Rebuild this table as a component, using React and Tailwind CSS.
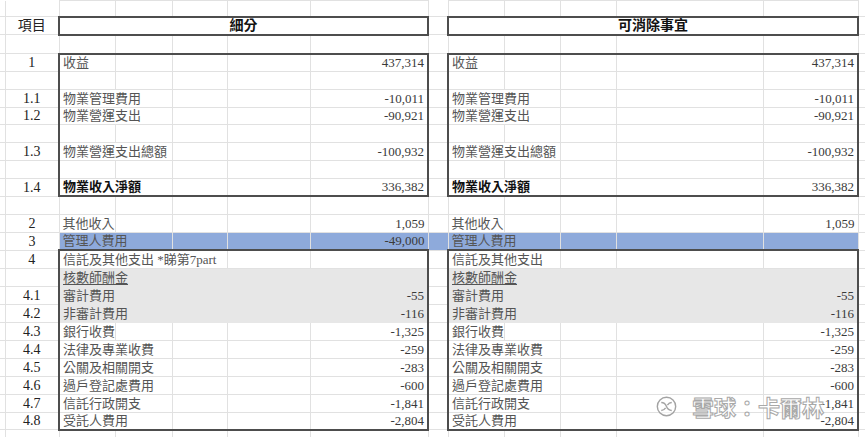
import React from 'react';

const GRID = 'border border-[#e1e1e1]';
const TEXT = 'px-[3px] pb-[1px] align-bottom whitespace-nowrap overflow-hidden leading-[15px]';

const COLS = [
  'w-[5px]', 'w-[54px]', 'w-[56px]', 'w-[57px]', 'w-[55px]', 'w-[83px]', 'w-[118px]',
  'w-[20px]', 'w-[56px]', 'w-[56px]', 'w-[56px]', 'w-[147px]', 'w-[95px]', 'w-[7px]',
];

function cellCls({ first, last, fill, box }) {
  return [
    GRID,
    fill === 'blue' && 'bg-[#8eaadb] border-[#8eaadb]',
    fill === 'gray' && 'bg-[#e7e7e7] border-[#e7e7e7]',
    box && first && 'border-l-2 border-l-[#4d4d4d]',
    box && last && 'border-r-2 border-r-[#4d4d4d]',
    (box === 'top' || box === 'both') && 'border-t-2 border-t-[#4d4d4d]',
    (box === 'bottom' || box === 'both') && 'border-b-2 border-b-[#4d4d4d]',
  ].filter(Boolean).join(' ');
}

function region(key, r = {}) {
  const { label, span = 1, value, fill, box, bold, underline } = r;
  const cells = [];
  cells.push(
    <td key={key + 'l'} colSpan={span} className={`${cellCls({ first: true, fill, box })} ${TEXT} text-[13px] ${bold ? 'font-bold text-[#111]' : 'text-[#555]'}`}>
      {underline ? <span className="underline underline-offset-2">{label}</span> : label}
    </td>
  );
  for (let i = span; i < 4; i++) {
    cells.push(<td key={key + i} className={cellCls({ fill, box })} />);
  }
  cells.push(
    <td key={key + 'v'} className={`${cellCls({ last: true, fill, box })} ${TEXT} text-right text-[13px] text-[#3a3a3a]`}>
      {value}
    </td>
  );
  return cells;
}

function Row({ h = 'h-[18px]', num, l, r, gap, edge }) {
  return (
    <tr className={h}>
      <td className={`${GRID} border-l-0 ${edge || ''}`} />
      <td className={`${GRID} ${edge || ''} ${TEXT} text-center text-[14px] text-[#222]`}>{num}</td>
      {region('a', l)}
      <td className={`${GRID} ${edge || ''} ${gap === 'blue' ? 'bg-[#8eaadb] border-[#8eaadb]' : ''}`} />
      {region('b', r)}
      <td className={`${GRID} border-r-0 ${edge || ''}`} />
    </tr>
  );
}

const both = (o) => ({ l: o, r: o });

export default function App() {
  return (
    <div className="relative w-[865px] h-[437px] overflow-hidden bg-white font-['Liberation_Serif','Noto_Sans_CJK_TC',serif]">
      <table className="table-fixed border-collapse w-[865px]">
        <colgroup>
          {COLS.map((c, i) => <col key={i} className={c} />)}
        </colgroup>
        <tbody>
          <Row h="h-[16px]" edge="border-t-0" />
          <tr className="h-[18px]">
            <td className={`${GRID} border-l-0`} />
            <td className={`${GRID} ${TEXT} text-center text-[14px] text-[#222]`}>項目</td>
            <td colSpan={5} className={`${cellCls({ first: true, last: true, box: 'both' })} ${TEXT} text-center text-[14px] font-bold text-[#111]`}>細分</td>
            <td className={GRID} />
            <td colSpan={5} className={`${cellCls({ first: true, last: true, box: 'both' })} ${TEXT} text-center text-[14px] font-bold text-[#111]`}>可消除事宜</td>
            <td className={`${GRID} border-r-0`} />
          </tr>
          <Row h="h-[19px]" />
          <Row h="h-[17px]" num="1" {...both({ label: '收益', value: '437,314', box: 'top' })} />
          <Row {...both({ box: 'mid' })} />
          <Row num="1.1" {...both({ label: '物業管理費用', span: 2, value: '-10,011', box: 'mid' })} />
          <Row h="h-[17px]" num="1.2" {...both({ label: '物業營運支出', span: 2, value: '-90,921', box: 'mid' })} />
          <Row {...both({ box: 'mid' })} />
          <Row num="1.3" {...both({ label: '物業營運支出總額', span: 2, value: '-100,932', box: 'mid' })} />
          <Row {...both({ box: 'mid' })} />
          <Row num="1.4" {...both({ label: '物業收入淨額', span: 2, value: '336,382', box: 'bottom', bold: true })} />
          <Row />
          <Row num="2" {...both({ label: '其他收入', value: '1,059' })} />
          <Row
            num="3"
            gap="blue"
            l={{ label: '管理人費用', span: 2, value: '-49,000', fill: 'blue' }}
            r={{ label: '管理人費用', span: 2, fill: 'blue' }}
          />
          <Row
            num="4"
            l={{ label: '信託及其他支出 *睇第7part', span: 3, box: 'top' }}
            r={{ label: '信託及其他支出', span: 2, box: 'top' }}
          />
          <Row {...both({ label: '核數師酬金', span: 2, fill: 'gray', box: 'mid', underline: true })} />
          <Row num="4.1" {...both({ label: '審計費用', value: '-55', fill: 'gray', box: 'mid' })} />
          <Row num="4.2" {...both({ label: '非審計費用', span: 2, value: '-116', fill: 'gray', box: 'mid' })} />
          <Row num="4.3" {...both({ label: '銀行收費', value: '-1,325', box: 'mid' })} />
          <Row num="4.4" {...both({ label: '法律及專業收費', span: 2, value: '-259', box: 'mid' })} />
          <Row num="4.5" {...both({ label: '公關及相關開支', span: 2, value: '-283', box: 'mid' })} />
          <Row num="4.6" {...both({ label: '過戶登記處費用', span: 2, value: '-600', box: 'mid' })} />
          <Row num="4.7" {...both({ label: '信託行政開支', span: 2, value: '-1,841', box: 'mid' })} />
          <Row h="h-[17px]" num="4.8" {...both({ label: '受託人費用', span: 2, value: '-2,804', box: 'bottom' })} />
          <Row h="h-[9px]" edge="border-b-0" />
        </tbody>
      </table>

      {/* watermark */}
      <div className="absolute left-[656px] top-[395px] flex items-center gap-[15px] opacity-90">
        <svg width="21" height="21" viewBox="0 0 24 24" fill="none" stroke="#9a9a9a" strokeWidth="1.6">
          <circle cx="12" cy="12" r="10.5" fill="white" fillOpacity="0.6" />
          <path d="M6 7.5c3 0 5 2 6 4.5s3 4.5 6 4.5" />
          <path d="M6 16.5c2.5 0 4-1.5 5-3" />
          <path d="M13 10.5c1-1.5 2.5-3 5-3" />
        </svg>
        <span className="text-[22px] leading-none text-white font-['Noto_Sans_CJK_TC',sans-serif] font-bold [-webkit-text-stroke:1px_#a0a0a0]">
          雪球：卡爾林
        </span>
      </div>
    </div>
  );
}
